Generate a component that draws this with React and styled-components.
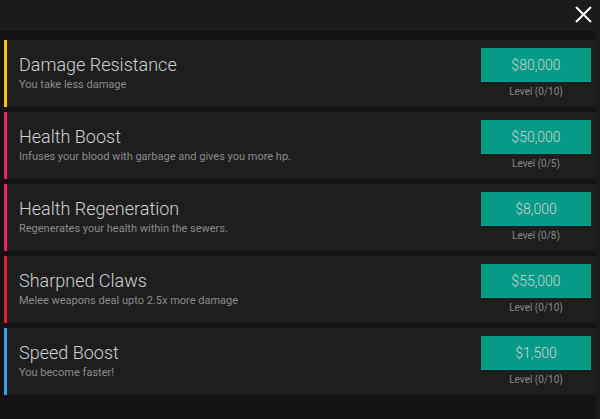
import styled, { createGlobalStyle } from "styled-components";

const GlobalStyle = createGlobalStyle`
  html, body {
    margin: 0;
    padding: 0;
    background: #1b1b1d;
    font-family: Roboto, "Liberation Sans", sans-serif;
  }
`;

const upgrades = [
  { name: "Damage Resistance", desc: "You take less damage", price: "$80,000", level: "Level (0/10)", color: "#f5c518" },
  { name: "Health Boost", desc: "Infuses your blood with garbage and gives you more hp.", price: "$50,000", level: "Level (0/5)", color: "#f0206e" },
  { name: "Health Regeneration", desc: "Regenerates your health within the sewers.", price: "$8,000", level: "Level (0/8)", color: "#f0206e" },
  { name: "Sharpned Claws", desc: "Melee weapons deal  upto 2.5x more damage", price: "$55,000", level: "Level (0/10)", color: "#e8202a" },
  { name: "Speed Boost", desc: "You become faster!", price: "$1,500", level: "Level (0/10)", color: "#3aa0e8" },
];

const Page = styled.div`
  width: 600px;
  height: 419px;
  display: flex;
  flex-direction: column;
`;

const Header = styled.div`
  height: 31px;
  display: flex;
  justify-content: flex-end;
  align-items: flex-start;
  padding-right: 8px;
`;

const CloseButton = styled.button`
  margin-top: 6px;
  width: 17px;
  height: 17px;
  padding: 0;
  border: none;
  background: none;
  cursor: pointer;
  display: block;
`;

const List = styled.div`
  flex: 1;
  width: 596px;
  background: #131315;
  padding: 9px 0 0 4px;
  box-sizing: border-box;
  display: flex;
  flex-direction: column;
  gap: 5px;
`;

const Card = styled.div`
  height: 67px;
  box-sizing: border-box;
  background: #1e1e1f;
  border-left: 3px solid ${(p) => p.$accent};
  display: flex;
  justify-content: space-between;
  padding: 8px 5px 0 12px;
`;

const Info = styled.div`
  display: flex;
  flex-direction: column;
  padding-top: 5px;
`;

const Title = styled.div`
  font-size: 18px;
  font-weight: 300;
  color: #d2d2d2;
  line-height: 24px;
`;

const Desc = styled.div`
  margin-top: 1px;
  font-size: 11px;
  color: #8c8c8c;
  line-height: 14px;
`;

const Buy = styled.div`
  display: flex;
  flex-direction: column;
  align-items: center;
  width: 110px;
`;

const PriceButton = styled.button`
  width: 110px;
  height: 34px;
  border: none;
  background: #039a86;
  color: #d4d4d4;
  font-family: Roboto, "Liberation Sans", sans-serif;
  font-size: 14px;
  font-weight: 300;
  cursor: pointer;
`;

const Level = styled.div`
  margin-top: 4px;
  font-size: 10px;
  color: #8a8a8a;
`;

function UpgradeRow({ upgrade }) {
  const { name, desc, price, level, color } = upgrade;
  return (
    <Card $accent={color}>
      <Info>
        <Title>{name}</Title>
        <Desc>{desc}</Desc>
      </Info>
      <Buy>
        <PriceButton>{price}</PriceButton>
        <Level>{level}</Level>
      </Buy>
    </Card>
  );
}

export default function App() {
  return (
    <>
      <GlobalStyle />
      <Page>
        <Header>
          <CloseButton aria-label="close">
            <svg width="17" height="17" viewBox="0 0 17 17">
              <path d="M1 1 L16 16 M16 1 L1 16" stroke="#fff" strokeWidth="2" />
            </svg>
          </CloseButton>
        </Header>
        <List>
          {upgrades.map((u) => (
            <UpgradeRow key={u.name} upgrade={u} />
          ))}
        </List>
      </Page>
    </>
  );
}
